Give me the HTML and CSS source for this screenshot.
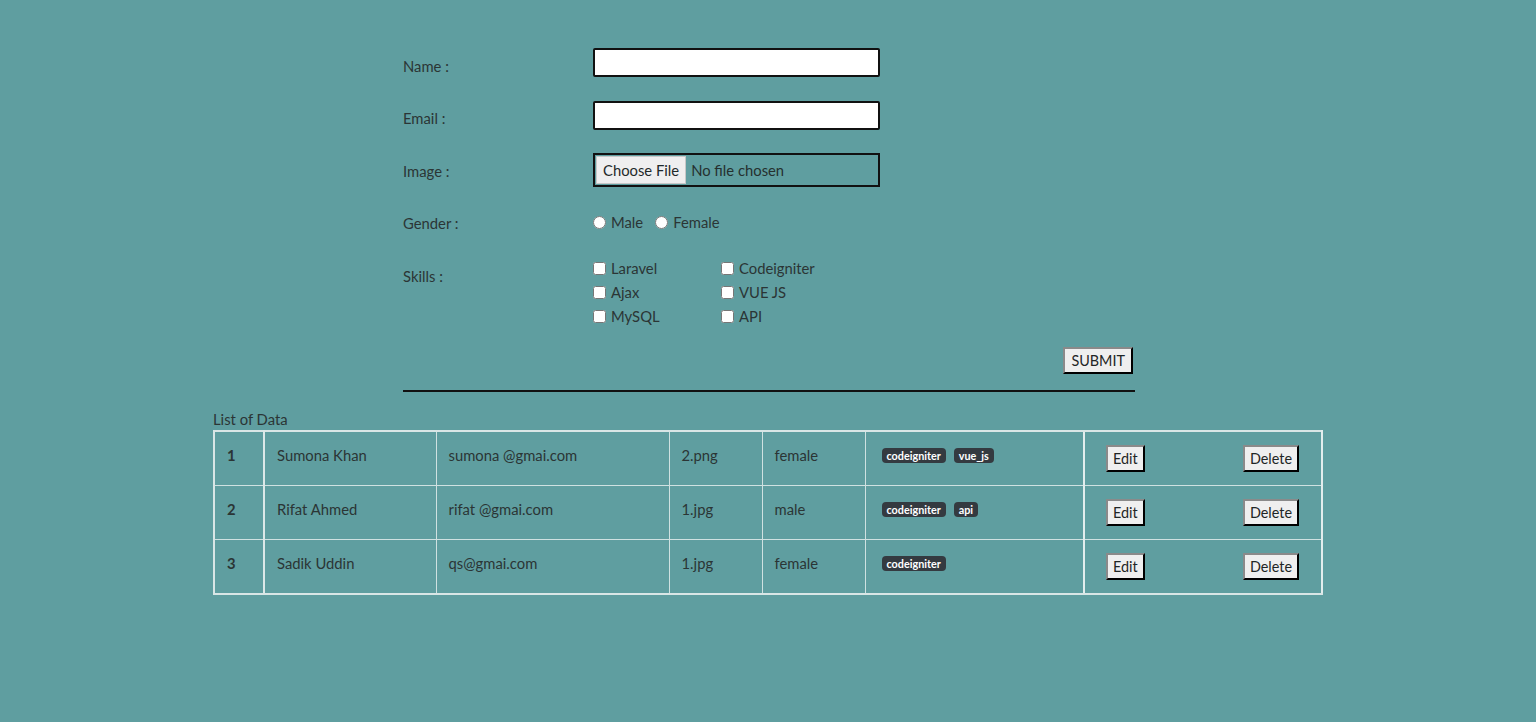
FILE: index.html
```html
<!DOCTYPE html>
<html>
<head>
<meta charset="utf-8">
<link rel="stylesheet" href="styles.css">
</head>
<body>
<div class="container">
  <form class="entry-form">
    <div class="form-row row-name">
      <label class="field-label">Name :</label>
      <input class="text-input" type="text">
    </div>
    <div class="form-row row-email">
      <label class="field-label">Email :</label>
      <input class="text-input" type="text">
    </div>
    <div class="form-row row-image">
      <label class="field-label">Image :</label>
      <input class="file-input" type="file">
    </div>
    <div class="form-row row-gender">
      <label class="field-label">Gender :</label>
      <div class="radios">
        <label class="choice"><input type="radio" name="g">Male</label>
        <label class="choice"><input type="radio" name="g">Female</label>
      </div>
    </div>
    <div class="form-row row-skills">
      <label class="field-label">Skills :</label>
      <div class="skills-grid">
        <label class="choice"><input type="checkbox">Laravel</label>
        <label class="choice"><input type="checkbox">Codeigniter</label>
        <label class="choice"><input type="checkbox">Ajax</label>
        <label class="choice"><input type="checkbox">VUE JS</label>
        <label class="choice"><input type="checkbox">MySQL</label>
        <label class="choice"><input type="checkbox">API</label>
      </div>
    </div>
    <div class="submit-row">
      <button type="button" class="btn">SUBMIT</button>
    </div>
    <hr class="divider">
  </form>

  <div class="list-title">List of Data</div>
  <table class="data-table">
    <colgroup>
      <col class="c1"><col class="c2"><col class="c3"><col class="c4"><col class="c5"><col class="c6"><col class="c7">
    </colgroup>
    <tbody>
      <tr>
        <td class="num">1</td>
        <td>Sumona Khan</td>
        <td>sumona @gmai.com</td>
        <td>2.png</td>
        <td>female</td>
        <td class="tags"><span class="badge">codeigniter</span><span class="badge">vue_js</span></td>
        <td class="actions"><div class="action-wrap"><button type="button" class="btn">Edit</button><button type="button" class="btn">Delete</button></div></td>
      </tr>
      <tr>
        <td class="num">2</td>
        <td>Rifat Ahmed</td>
        <td>rifat @gmai.com</td>
        <td>1.jpg</td>
        <td>male</td>
        <td class="tags"><span class="badge">codeigniter</span><span class="badge">api</span></td>
        <td class="actions"><div class="action-wrap"><button type="button" class="btn">Edit</button><button type="button" class="btn">Delete</button></div></td>
      </tr>
      <tr>
        <td class="num">3</td>
        <td>Sadik Uddin</td>
        <td>qs@gmai.com</td>
        <td>1.jpg</td>
        <td>female</td>
        <td class="tags"><span class="badge">codeigniter</span></td>
        <td class="actions"><div class="action-wrap"><button type="button" class="btn">Edit</button><button type="button" class="btn">Delete</button></div></td>
      </tr>
    </tbody>
  </table>
</div>
</body>
</html>
```

FILE: styles.css
```css
html, body {
  margin: 0;
  padding: 0;
}
body {
  background: #5f9ea0;
  color: #25302f;
  font-family: "Lato", "Noto Sans", sans-serif;
  font-size: 14.8px;
  line-height: 22px;
  min-height: 722px;
}
.container {
  width: 1110px;
  margin: 0 auto;
}
.entry-form {
  margin-left: 190px;
  width: 732px;
  padding-top: 48px;
}
.form-row {
  display: flex;
  align-items: flex-start;
}
.field-label {
  width: 190px;
  flex: none;
  padding-top: 7px;
  color: #2b3535;
}
.row-name { margin-bottom: 24px; }
.row-email { margin-bottom: 23px; }
.row-image { margin-bottom: 18px; }
.row-gender { margin-bottom: 17px; height: 36px; }
.row-email .field-label { padding-top: 6px; }
.row-image .field-label { padding-top: 7px; }
.text-input {
  box-sizing: border-box;
  width: 287px;
  height: 29px;
  margin: 0;
  border: 2px solid #111;
  border-radius: 2px;
  background: #fff;
  padding: 2px 6px;
  font: inherit;
}
.file-input {
  box-sizing: border-box;
  width: 287px;
  height: 34px;
  margin: 0;
  border: 2px solid #111;
  padding: 1px;
  background: transparent;
  color: #25302f;
  font-family: "Lato", "Noto Sans", sans-serif;
  font-size: 14.8px;
}
.file-input::file-selector-button {
  font: inherit;
  height: 28px;
  padding: 0 6px;
  margin-right: 5px;
  background: #efefef;
  border: 1px solid #c8c8c8;
  border-radius: 0;
  color: #1f2a2a;
}
.radios {
  display: flex;
  gap: 12px;
  padding-top: 6px;
}
.choice {
  display: flex;
  align-items: center;
  color: #2b3535;
}
.choice input {
  margin: 0 5px 0 0;
  width: 13px;
  height: 13px;
}
.skills-grid {
  display: grid;
  grid-template-columns: 128px auto;
  grid-auto-rows: 24px;
  margin-top: -2px;
}
.submit-row {
  display: flex;
  justify-content: flex-end;
  padding-right: 2px;
  margin-top: 19px;
}
.btn {
  box-sizing: border-box;
  height: 27px;
  padding: 0 6px;
  background: #efefef;
  border: 2px outset #6a6a6a;
  border-color: #8a8a8a #444 #444 #8a8a8a;
  font-family: "Lato", "Noto Sans", sans-serif;
  font-size: 14.4px;
  color: #1f2626;
}
.divider {
  margin: 16px 0 0 0;
  width: 732px;
  border: none;
  border-top: 2px solid #111;
  height: 0;
}
.list-title {
  margin-top: 16px;
  line-height: 22px;
  height: 22px;
  color: #2b3535;
}
.data-table {
  width: 1108px;
  border-collapse: collapse;
  table-layout: fixed;
  border: 1px solid #d9e6e6;
}
.c1 { width: 50px; }
.c2 { width: 172px; }
.c3 { width: 233px; }
.c4 { width: 93px; }
.c5 { width: 103px; }
.c6 { width: 219px; }
.c7 { width: 238px; }
.data-table td {
  border: 1px solid #cfe1e1;
  padding: 12px 12px 19px 12px;
  height: 22px;
  vertical-align: top;
  color: #2b3535;
}
.data-table tr:first-child td { border-top: 2px solid #d9e6e6; }
.data-table tr:last-child td { border-bottom: 2px solid #d9e6e6; }
.data-table td:first-child { border-left: 2px solid #d9e6e6; }
.data-table td.num {
  font-weight: bold;
  padding-left: 12px;
  border-right: 2px solid #dce8e8;
}
.data-table td.tags {
  padding-left: 16px;
}
.data-table td.actions {
  border-left: 2px solid #e3eded;
  border-right: 2px solid #e3eded;
  padding: 13px 22px 12px 21px;
}
.action-wrap {
  display: flex;
  justify-content: space-between;
}
.action-wrap .btn {
  height: 27px;
  padding: 0 5px;
}
.badge {
  display: inline-block;
  background: #343a40;
  color: #fff;
  font-weight: bold;
  font-size: 10.8px;
  line-height: 11px;
  padding: 2px 5px;
  border-radius: 4px;
  margin-right: 8px;
  vertical-align: top;
  margin-top: 4px;
}
```
